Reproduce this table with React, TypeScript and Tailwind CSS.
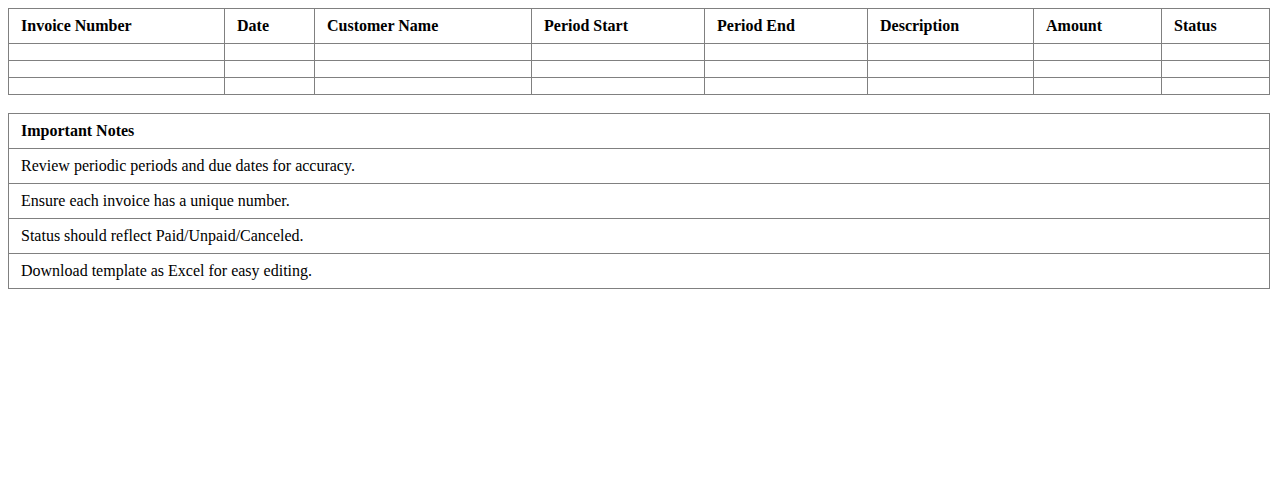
const headers = [
  { label: 'Invoice Number', w: 'w-[216px]' },
  { label: 'Date', w: 'w-[90px]' },
  { label: 'Customer Name', w: 'w-[217px]' },
  { label: 'Period Start', w: 'w-[173px]' },
  { label: 'Period End', w: 'w-[163px]' },
  { label: 'Description', w: 'w-[166px]' },
  { label: 'Amount', w: 'w-[128px]' },
  { label: 'Status', w: '' },
];

const notes = [
  'Review periodic periods and due dates for accuracy.',
  'Ensure each invoice has a unique number.',
  'Status should reflect Paid/Unpaid/Canceled.',
  'Download template as Excel for easy editing.',
];

export default function App() {
  return (
    <div className="min-h-screen bg-white p-2 text-[16px] leading-[18px] text-black font-['Liberation_Serif','Times_New_Roman',serif]">
      <table className="w-full table-fixed border-collapse">
        <thead>
          <tr>
            {headers.map((h) => (
              <th key={h.label} className={`${h.w} border border-[#808080] px-3 py-2 text-left font-bold`}>
                {h.label}
              </th>
            ))}
          </tr>
        </thead>
        <tbody>
          {[0, 1, 2].map((r) => (
            <tr key={r}>
              {headers.map((h) => (
                <td key={h.label} className="border border-[#808080] px-3 py-2"></td>
              ))}
            </tr>
          ))}
        </tbody>
      </table>

      <table className="mt-[18px] w-full border-collapse">
        <thead>
          <tr>
            <th className="border border-[#808080] px-3 py-2 text-left font-bold">Important Notes</th>
          </tr>
        </thead>
        <tbody>
          {notes.map((n) => (
            <tr key={n}>
              <td className="border border-[#808080] px-3 py-2">{n}</td>
            </tr>
          ))}
        </tbody>
      </table>
    </div>
  );
}
